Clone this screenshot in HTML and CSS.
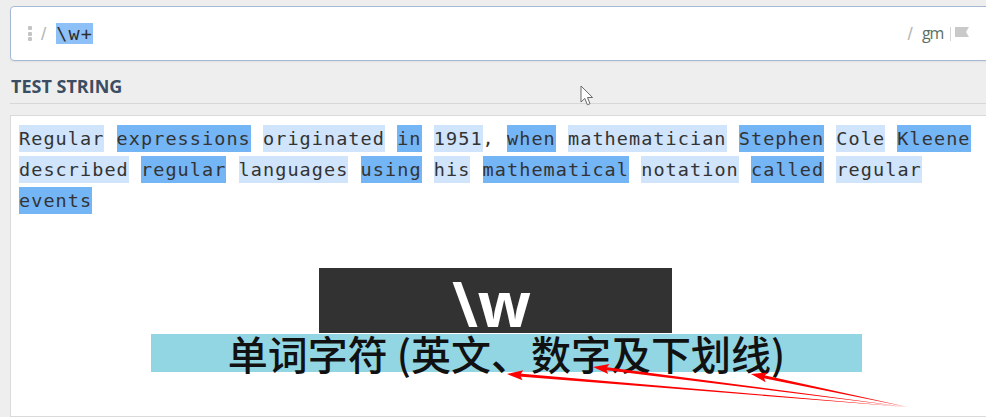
FILE: index.html
```html
<!DOCTYPE html>
<html lang="en">
<head>
<meta charset="utf-8">
<title>regex editor</title>
<link rel="stylesheet" href="styles.css">
</head>
<body>
<div class="editor">
  <div class="regex-bar">
    <span class="grip"><i></i><i></i><i></i></span>
    <span class="delim">/</span>
    <span class="regex"><span class="rx-hl">\w+</span></span>
    <span class="spacer"></span>
    <span class="delim delim-end">/</span>
    <span class="flags">gm</span>
    <span class="flag-sep"></span>
    <svg class="flag-icon" width="14" height="11" viewBox="0 0 14 11"><path d="M0 0H14L11 5L14 10H0Z" fill="#c9c9c9"/></svg>
  </div>
  <div class="section-title">TEST STRING</div>
  <div class="test-box">
    <div class="test-text"><span class="m1">Regular</span> <span class="m2">expressions</span> <span class="m1">originated</span> <span class="m2">in</span> <span class="m1">1951</span>, <span class="m2">when</span> <span class="m1">mathematician</span> <span class="m2">Stephen</span> <span class="m1">Cole</span> <span class="m2">Kleene</span> <span class="m1">described</span> <span class="m2">regular</span> <span class="m1">languages</span> <span class="m2">using</span> <span class="m1">his</span> <span class="m2">mathematical</span> <span class="m1">notation</span> <span class="m2">called</span> <span class="m1">regular</span> <span class="m2">events</span></div>
    <div class="caption">
      <div class="caption-key"><span class="key-text">\w</span></div>
      <div class="caption-desc">单词字符 (英文、数字及下划线)</div>
    </div>
  </div>
</div>
<svg class="arrows" width="986" height="417" viewBox="0 0 986 417">
  <g fill="#f00">
    <g transform="translate(507 374) rotate(4.72)">
      <polygon points="0,0 16,-5 13,0 16,5"/>
      <polygon points="12,-1.6 401,0 12,1.6"/>
    </g>
    <g transform="translate(593 367) rotate(7.26)">
      <polygon points="0,0 16,-5 13,0 16,5"/>
      <polygon points="12,-1.6 316,0 12,1.6"/>
    </g>
    <g transform="translate(751 374) rotate(11.94)">
      <polygon points="0,0 16,-5 13,0 16,5"/>
      <polygon points="12,-1.6 160,0 12,1.6"/>
    </g>
  </g>
</svg>
<svg class="cursor" width="14" height="22" viewBox="0 0 14 22"><path d="M1 1V17L4.8 13.4L7.4 19.8L10 18.7L7.5 12.5H12.6Z" fill="#fff" stroke="#6a6a6a" stroke-width="1" stroke-linejoin="round"/></svg>
</body>
</html>
```
FILE: styles.css
```css
html, body {
  margin: 0;
  padding: 0;
}
body {
  background: #eeeeee;
  width: 986px;
  height: 417px;
  overflow: hidden;
  position: relative;
  font-family: "Open Sans", "Noto Sans", sans-serif;
}
.editor {
  width: 982px;
  padding: 6px 0 0 10px;
}
.regex-bar {
  box-sizing: border-box;
  height: 55px;
  background: #fff;
  border: 1px solid #a5b9d5;
  border-radius: 4px;
  box-shadow: 0 1px 2px rgba(0,0,0,0.06);
  display: flex;
  align-items: center;
  padding: 0 22px 0 17px;
}
.grip {
  display: flex;
  flex-direction: column;
  gap: 1.5px;
  margin-right: 9px;
}
.grip i {
  display: block;
  width: 4px;
  height: 4px;
  background: #c4c4c4;
  border-radius: 1px;
}
.delim {
  color: #b8b8b8;
  font-size: 19px;
  font-family: "Liberation Sans", sans-serif;
}
.regex {
  margin-left: 10px;
  font-family: "DejaVu Sans Mono", monospace;
  font-size: 18.5px;
  letter-spacing: 1.08px;
  color: #2e2e2e;
}
.rx-hl {
  background: #8dc0f7;
}
.spacer {
  flex: 1;
}
.delim-end {
  margin-right: 9px;
}
.flags {
  color: #5a6f64;
  font-size: 16px;
  letter-spacing: -1.2px;
  font-family: "Open Sans", sans-serif;
  margin-top: -2px;
}
.flag-sep {
  width: 1px;
  height: 14px;
  background: #d6d6d6;
  margin: 0 4px 0 7px;
}
.flag-icon {
  display: block;
  margin-top: -3px;
}
.section-title {
  margin-top: 13px;
  font-weight: 700;
  font-size: 18px;
  color: #3a4d63;
  line-height: 24px;
  padding-left: 1px;
  padding-bottom: 5px;
  border-bottom: 1px solid #d7d7d7;
}
.test-box {
  margin-top: 11px;
  height: 302px;
  box-sizing: border-box;
  background: #fff;
  border: 1px solid #dadada;
  padding: 7px 7px 0 8px;
}
.test-text {
  font-family: "DejaVu Sans Mono", monospace;
  font-size: 18.5px;
  letter-spacing: 1.06px;
  line-height: 31px;
  color: #333;
}
.m1, .m2 {
  padding: 3.25px 0;
}
.m1 {
  background: #d0e4fb;
}
.m2 {
  background: #74b5f6;
}
.caption {
  margin-top: 52px;
  margin-left: 132px;
  width: 711px;
  display: flex;
  flex-direction: column;
}
.caption-key {
  margin-left: 168px;
  width: 353px;
  height: 65px;
  background: #323232;
  display: flex;
  justify-content: center;
  align-items: flex-end;
}
.key-text {
  color: #fff;
  font-family: "Open Sans", sans-serif;
  font-weight: 700;
  font-size: 62px;
  line-height: 60px;
  margin-left: -8px;
}
.caption-desc {
  height: 38px;
  margin-top: 1px;
  background: #93d6e3;
  color: #111;
  font-family: "Noto Sans CJK SC", sans-serif;
  font-weight: 500;
  font-size: 40px;
  line-height: 38px;
  text-align: center;
  white-space: nowrap;
}
.arrows {
  position: absolute;
  left: 0;
  top: 0;
  pointer-events: none;
}
.cursor {
  position: absolute;
  left: 580px;
  top: 85px;
  pointer-events: none;
}
```
